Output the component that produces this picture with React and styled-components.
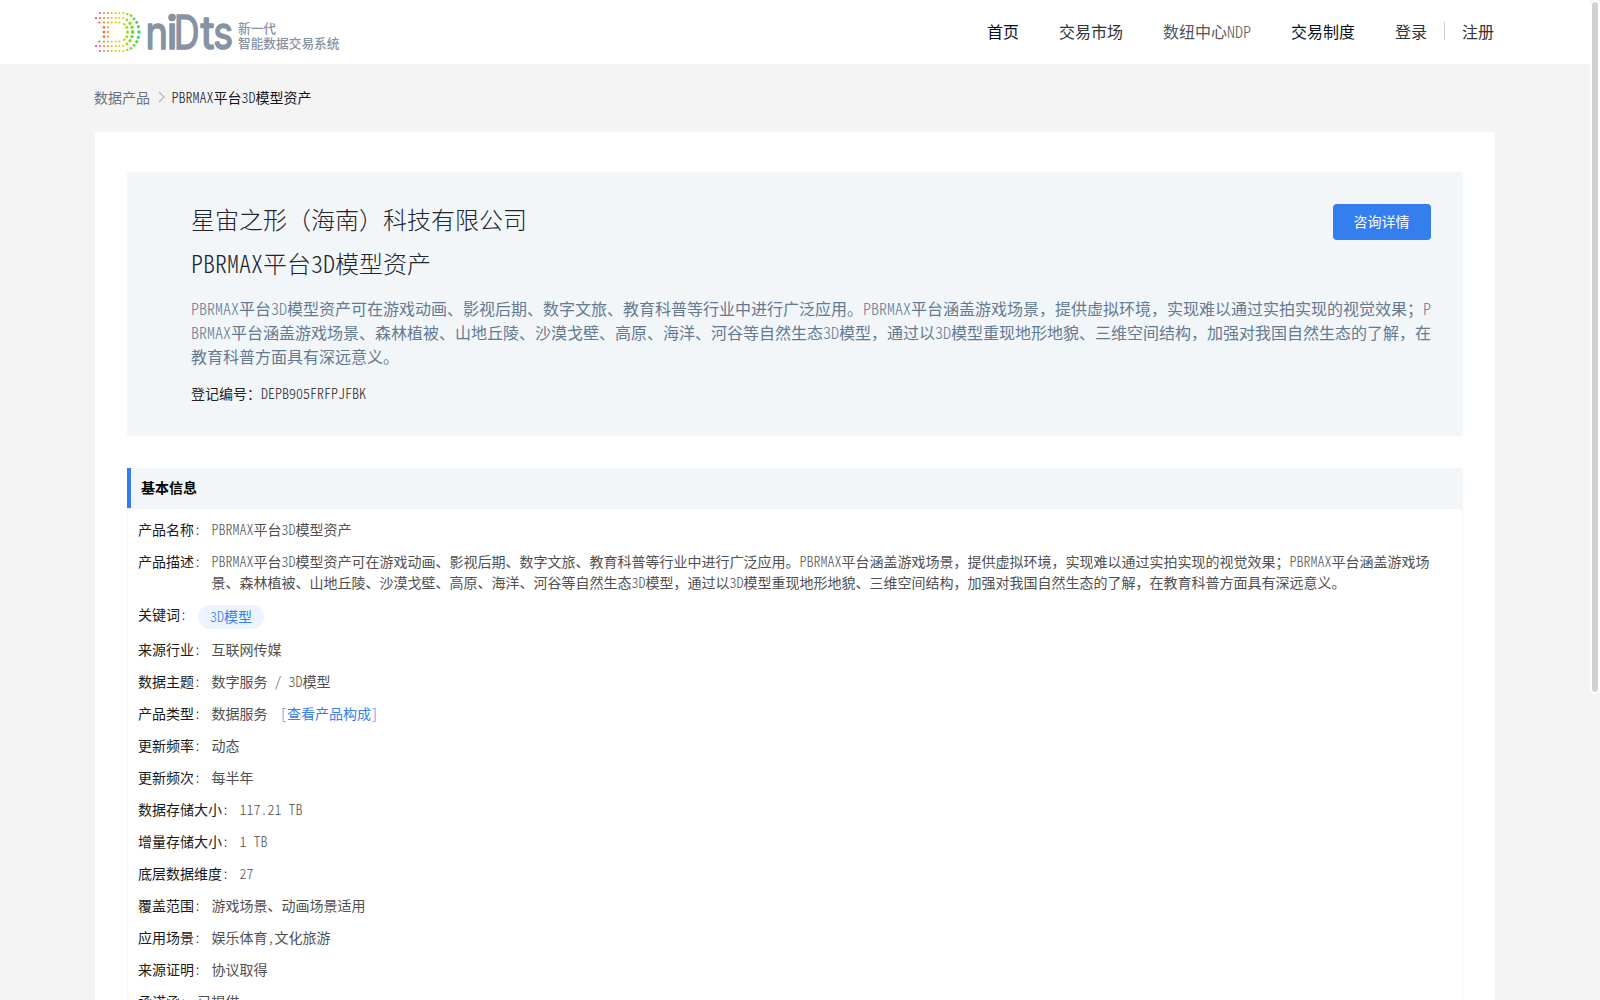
import styled, { createGlobalStyle } from "styled-components";

const GlobalStyle = createGlobalStyle`
	* {
		box-sizing: border-box;
	}

	body {
		margin: 0;
		height: 1000px;
		overflow: hidden;
		background-color: #f4f4f4;
		color: #1f2329;
		font-family: "Noto Sans CJK SC", sans-serif;
		font-size: 14px;
	}
`;

const Page = styled.div`
	position: relative;
	height: 1000px;
	padding-right: 10px;
	overflow: hidden;
`;

const Container = styled.div`
	width: 1400px;
	margin: 0 auto;
`;

// half-width glyphs for latin letters and digits
const Half = styled.span`
	font-feature-settings: "hwid";
	font-weight: 300;
`;

const Header = styled.header`
	height: 64px;
	background-color: white;
`;

const HeaderInner = styled(Container)`
	display: flex;
	justify-content: space-between;
	align-items: center;
	height: 64px;
`;

const Brand = styled.div`
	display: flex;
	align-items: center;
`;

const Logo = styled.svg`
	display: block;
	width: 143px;
	height: 64px;
`;

const Slogan = styled.div`
	padding-top: 6px;
	color: #8693a3;
	font-size: 12.7px;
	font-weight: 500;
	line-height: 15px;
`;

const Nav = styled.nav`
	display: flex;
	align-items: center;
	gap: 40px;
	padding: 0 1px 2px 0;
	font-size: 16px;
	line-height: 24px;
`;

const NavItem = styled.a`
	color: ${({ $color }) => $color || "#333333"};
`;

const Account = styled.div`
	display: flex;
	align-items: center;
`;

const Divider = styled.span`
	width: 1px;
	height: 18px;
	margin: 0 17px;
	background-color: #cccccc;
`;

const Breadcrumb = styled(Container)`
	display: flex;
	align-items: center;
	height: 68px;
	padding-bottom: 2px;
	line-height: 20px;
`;

const Crumb = styled.span`
	margin-left: ${({ $active }) => ($active ? "1.5px" : "-1px")};
	color: ${({ $active }) => ($active ? "#11131f" : "#6b6f7e")};
`;

const Chevron = styled.svg`
	width: 20px;
	height: 14px;
`;

const Card = styled(Container)`
	height: 1300px;
	padding: 40px 32px;
	background-color: white;
`;

const Hero = styled.section`
	height: 264px;
	padding: 32px 32px 32px 64px;
	background-color: #f2f6f9;
`;

const HeroTop = styled.div`
	display: flex;
	justify-content: space-between;
	align-items: flex-start;
	height: 35px;
`;

const Title = styled.h1`
	margin: -1px 0 0;
	color: #22252e;
	font-size: 24px;
	font-weight: 300;
	line-height: 32px;
`;

const ProductTitle = styled(Title)`
	margin-top: 8px;
`;

const ConsultButton = styled.button`
	width: 98px;
	height: 36px;
	padding: 0 1px 2px 0;
	border: 0;
	border-radius: 4px;
	background-color: #347eed;
	color: white;
	font: inherit;
`;

const Intro = styled.p`
	margin: 17px -4px 0 0;
	color: #647a92;
	font-size: 16px;
	line-height: 24px;
	word-break: break-all;
`;

const RegisterNo = styled.p`
	margin: 15px 0 0;
	line-height: 21px;
`;

const SectionTitle = styled.h2`
	height: 40px;
	margin: 32px 0 0;
	padding-left: 10px;
	border-left: 4px solid #347eed;
	background-color: #f2f6f9;
	color: black;
	font-size: 14px;
	font-weight: 700;
	line-height: 38px;
`;

const InfoList = styled.div`
	display: flex;
	flex-direction: column;
	gap: 11px;
	height: 900px;
	padding: 10px 30px 0 10px;
	border: 1px solid #f4f6f8;
	border-top-color: #f2f6f9;
`;

const Row = styled.div`
	display: flex;
	align-items: flex-start;
	color: #505050;
	line-height: 21px;
`;

const Label = styled.span`
	flex: none;
	margin-right: 10.5px;
	color: #1a1a1a;
`;

const Value = styled.span`
	white-space: pre-wrap;
	word-break: break-all;
`;

const Tag = styled.span`
	height: 24px;
	margin: 1px 0 -1px 0.5px;
	padding: 0 12px;
	border-radius: 12px;
	background-color: #ecf5ff;
	color: #347eed;
	line-height: 23px;
`;

const Link = styled.a`
	margin-left: 12.5px;
	color: #347eed;
`;

const Scrollbar = styled.div`
	position: absolute;
	top: 0;
	right: 0;
	width: 10px;
	height: 694px;
	border: 2px solid white;
	border-radius: 5px;
	background-color: #d2d2d2;
`;

const name = "PBRMAX平台3D模型资产";
const description =
	"PBRMAX平台3D模型资产可在游戏动画、影视后期、数字文旅、教育科普等行业中进行广泛应用。PBRMAX平台涵盖游戏场景，提供虚拟环境，实现难以通过实拍实现的视觉效果；PBRMAX平台涵盖游戏场景、森林植被、山地丘陵、沙漠戈壁、高原、海洋、河谷等自然生态3D模型，通过以3D模型重现地形地貌、三维空间结构，加强对我国自然生态的了解，在教育科普方面具有深远意义。";

const rows = [
	{ label: "产品名称", value: name },
	{ label: "产品描述", value: description },
	{ label: "关键词", tag: "3D模型" },
	{ label: "来源行业", value: "互联网传媒" },
	{ label: "数据主题", value: "数字服务 / 3D模型" },
	{ label: "产品类型", value: "数据服务", link: "[查看产品构成]" },
	{ label: "更新频率", value: "动态" },
	{ label: "更新频次", value: "每半年" },
	{ label: "数据存储大小", value: "117.21 TB" },
	{ label: "增量存储大小", value: "1 TB" },
	{ label: "底层数据维度", value: "27" },
	{ label: "覆盖范围", value: "游戏场景、动画场景适用" },
	{ label: "应用场景", value: "娱乐体育,文化旅游" },
	{ label: "来源证明", value: "协议取得" },
	{ label: "承诺函", value: "已提供" },
];

// upper half of the logo's dots as [x, y, r]; mirrored below y = 32
const dots = [
	...[5, 9, 13, 16.7, 20.7, 24.3, 28.3].map((x) => [x, 13, 1]),
	[32.3, 14, 1.2],
	[36, 15.7, 1.3],
	[39, 18.7, 1.4],
	[41.7, 22.3, 1.5],
	[43.3, 26.7, 1.5],
	...[1, 5, 9, 13, 16.7, 20.7, 24.3, 28].map((x) => [x, 18, 1]),
	[32, 20, 1.3],
	[35, 23.3, 1.6],
	[37, 27.3, 1.7],
	...[4.3, 9, 13, 16.7, 20.7, 24.3].map((x) => [x, 22.5, 1]),
	[29.3, 24.3, 1.2],
	[31.7, 27.3, 1.4],
	[9, 27.3, 1.3],
	[13, 27.3, 1],
];

const middleDots = [
	[9, 32, 1.4],
	[13, 32, 1.1],
	[32.5, 32, 1.5],
	[37.5, 32, 1.8],
	[44, 32, 1.7],
];

const allDots = [...dots, ...dots.map(([x, y, r]) => [x, 64 - y, r]), ...middleDots];

function Mixed({ text }) {
	return text.split(/([\x20-\x7e]+)/).map((part, i) => (i % 2 ? <Half key={i}>{part}</Half> : part));
}

function LogoMark() {
	return (
		<Logo viewBox="0 0 143 64">
			<defs>
				<linearGradient id="rainbow" gradientUnits="userSpaceOnUse" x1="0" y1="0" x2="45" y2="0">
					<stop offset="0" stopColor="#f0407c" />
					<stop offset="0.1" stopColor="#f2585e" />
					<stop offset="0.22" stopColor="#f88040" />
					<stop offset="0.36" stopColor="#f4b828" />
					<stop offset="0.52" stopColor="#e0d210" />
					<stop offset="0.68" stopColor="#b0d81a" />
					<stop offset="0.84" stopColor="#74da30" />
					<stop offset="1" stopColor="#2edc70" />
				</linearGradient>
			</defs>
			<g fill="url(#rainbow)">
				{allDots.map(([x, y, r]) => (
					<circle key={`${x}-${y}`} cx={x} cy={y} r={r + 0.1} />
				))}
			</g>
			<text
				y="48.800"
				fontFamily="Inter"
				fontSize="46"
				fontWeight="400"
				fill="#8693a3"
				stroke="#8693a3"
				strokeWidth="1.6"
				strokeLinejoin="round"
			>
				<tspan x="50.600" textLength="22.500" lengthAdjust="spacingAndGlyphs">n</tspan>
				<tspan x="71.600">i</tspan>
				<tspan x="79" textLength="25.500" lengthAdjust="spacingAndGlyphs">D</tspan>
				<tspan x="105.600" textLength="14" lengthAdjust="spacingAndGlyphs">t</tspan>
				<tspan x="118.300" textLength="19.800" lengthAdjust="spacingAndGlyphs">s</tspan>
			</text>
			<circle cx="76.900" cy="17.700" r="3.500" fill="#8693a3" />
		</Logo>
	);
}

function App() {
	return (
		<Page>
			<GlobalStyle />
			<Header>
				<HeaderInner>
					<Brand>
						<LogoMark />
						<Slogan>
							<div>新一代</div>
							<div>智能数据交易系统</div>
						</Slogan>
					</Brand>
					<Nav>
						<NavItem $color="#0b1020">首页</NavItem>
						<NavItem>交易市场</NavItem>
						<NavItem $color="#555555">
							<Mixed text="数纽中心NDP" />
						</NavItem>
						<NavItem $color="#0b1020">交易制度</NavItem>
						<Account>
							<NavItem>登录</NavItem>
							<Divider />
							<NavItem>注册</NavItem>
						</Account>
					</Nav>
				</HeaderInner>
			</Header>
			<Breadcrumb>
				<Crumb>数据产品</Crumb>
				<Chevron viewBox="0 0 20 14" fill="none" stroke="#b4b8c0" strokeWidth="1.3">
					<path d="M9 2l5 5-5 5" />
				</Chevron>
				<Crumb $active>
					<Mixed text={name} />
				</Crumb>
			</Breadcrumb>
			<Card>
				<Hero>
					<HeroTop>
						<Title>星宙之形（海南）科技有限公司</Title>
						<ConsultButton>咨询详情</ConsultButton>
					</HeroTop>
					<ProductTitle>
						<Mixed text={name} />
					</ProductTitle>
					<Intro>
						<Mixed text={description} />
					</Intro>
					<RegisterNo>
						<Mixed text="登记编号：DEPB905FRFPJFBK" />
					</RegisterNo>
				</Hero>
				<SectionTitle>基本信息</SectionTitle>
				<InfoList>
					{rows.map(({ label, value, tag, link }) => (
						<Row key={label}>
							<Label>
								<Mixed text={`${label}:`} />
							</Label>
							{value && (
								<Value>
									<Mixed text={value} />
								</Value>
							)}
							{tag && (
								<Tag>
									<Mixed text={tag} />
								</Tag>
							)}
							{link && (
								<Link>
									<Mixed text={link} />
								</Link>
							)}
						</Row>
					))}
				</InfoList>
			</Card>
			<Scrollbar />
		</Page>
	);
}

export default App;
